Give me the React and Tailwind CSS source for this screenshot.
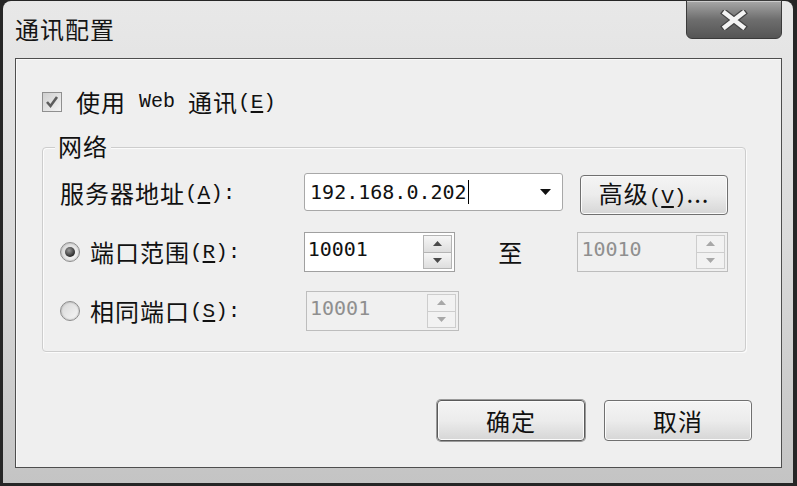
import React from 'react';

const cjk = "font-['Noto_Sans_CJK_SC','Noto_Sans',sans-serif]";
const mono = "font-['Liberation_Mono','DejaVu_Sans_Mono',monospace]";
const num = "font-['DejaVu_Sans_Mono','Liberation_Mono',monospace]";

// mnemonic like (A) with underlined letter
const Key = ({ k, colon }) => (
  <span className={`${mono} text-[21px] tracking-normal`}>
    (<span className="underline underline-offset-[3px]">{k}</span>){colon ? ':' : ''}
  </span>
);

const Tri = ({ up, disabled }) => (
  <svg width="9" height="5" viewBox="0 0 9 5">
    <path d={up ? 'M0 5 L4.5 0 L9 5 Z' : 'M0 0 L4.5 5 L9 0 Z'} fill={disabled ? '#a8a8a8' : '#4a4a4a'} />
  </svg>
);

function Spin({ value, disabled, width = 'w-[153px]' }) {
  return (
    <div className={`flex h-[40px] ${width} border ${disabled ? 'border-[#bdbdbd] bg-[#f0f0f0]' : 'border-[#a0a0a0] bg-white'}`}>
      <div className={`flex-1 pl-[3px] pt-[4px] ${num} text-[20px] leading-[24px] ${disabled ? 'text-[#8f8f8f]' : 'text-[#111]'}`}>
        {value}
      </div>
      <div className={`my-[2px] mr-[2px] flex w-[29px] flex-col border ${disabled ? 'border-[#cdcdcd]' : 'border-[#b4b4b4]'}`}>
        <div className={`flex flex-1 items-center justify-center border-b ${disabled ? 'border-[#cdcdcd] bg-[#f2f2f2]' : 'border-[#b4b4b4] bg-gradient-to-b from-[#f6f6f6] to-[#dedede]'}`}>
          <Tri up disabled={disabled} />
        </div>
        <div className={`flex flex-1 items-center justify-center ${disabled ? 'bg-[#f2f2f2]' : 'bg-gradient-to-b from-[#f6f6f6] to-[#dedede]'}`}>
          <Tri disabled={disabled} />
        </div>
      </div>
    </div>
  );
}

const Radio = ({ checked }) => (
  <div className="flex h-[20px] w-[20px] items-center justify-center rounded-full border border-[#8c8c8c] bg-gradient-to-br from-[#d6d6d6] to-[#f8f8f8] shadow-[inset_0_0_2px_rgba(0,0,0,0.3)]">
    {checked && (
      <div className="h-[10px] w-[10px] rounded-full bg-[radial-gradient(circle_at_40%_35%,#9a9a9a,#2c2c2c_70%)]" />
    )}
  </div>
);

const Button = ({ children, def, className = '' }) => (
  <div
    className={`flex items-center justify-center rounded-[4px] border bg-gradient-to-b from-[#f4f4f4] via-[#ececec] to-[#d6d6d6] shadow-[inset_0_0_0_1px_#fbfbfb] ${
      def ? 'border-[#5a5a5a] ring-1 ring-[#9a9a9a]' : 'border-[#707070]'
    } ${className}`}
  >
    {children}
  </div>
);

export default function App() {
  return (
    <div className={`h-[486px] w-[797px] bg-[#262626] pl-[3px] pr-[4px] pt-[1px] pb-[3px] ${cjk} text-[#111]`}>
      <div className="relative flex h-full w-full flex-col rounded-t-[8px] bg-gradient-to-b from-[#e8e8e8] via-[#dadada] to-[#c4c4c4] pb-[15px] pl-[12px] pr-[11px]">
        {/* title bar */}
        <div className="flex h-[57px] items-center pb-[2px]">
          <span className="text-[24px] leading-none tracking-[1px] text-[#151515]">通讯配置</span>
        </div>

        {/* close button */}
        <div className="absolute right-[11px] top-[-1px] flex h-[39px] w-[96px] items-center justify-center rounded-b-[6px] border border-[#3a3a3a] bg-gradient-to-b from-[#a8a8a8] via-[#6e6e6e] to-[#555555] shadow-[inset_0_1px_0_#cccccc]">
          <svg width="30" height="20" viewBox="0 0 30 20">
            <path d="M6 3 L24 17 M24 3 L6 17" stroke="#444444" strokeWidth="7" strokeLinecap="square" />
            <path d="M6 3 L24 17 M24 3 L6 17" stroke="#f4f4f4" strokeWidth="4.5" strokeLinecap="square" />
          </svg>
        </div>

        {/* client area */}
        <div className="flex flex-1 flex-col border border-[#4e4e4e] bg-[#efefef] shadow-[inset_1px_1px_0_#fafafa]">
          {/* checkbox row */}
          <div className="ml-[26px] mt-[33px] flex h-[20px] items-center">
            <div className="flex h-[20px] w-[20px] items-center justify-center border border-[#8f8f8f] bg-gradient-to-br from-[#cfcfcf] to-[#f4f4f4]">
              <svg width="14" height="14" viewBox="0 0 14 14">
                <path d="M2 7 L5.5 11 L12 2" stroke="#5c5c5c" strokeWidth="2.6" fill="none" />
              </svg>
            </div>
            <span className="ml-[14px] flex items-center text-[24px] leading-none tracking-[1px]">
              使用<span className={`${mono} mx-[13px] text-[20px] tracking-normal`}>Web</span>通讯
              <Key k="E" />
            </span>
          </div>

          {/* group box */}
          <div className="relative ml-[26px] mr-[35px] mt-[35px] flex flex-col gap-[19px] rounded-[4px] border border-[#cdcdcd] px-[17px] pb-[20px] pt-[25px] shadow-[inset_1px_1px_0_#fbfbfb,1px_1px_0_#fbfbfb]">
            <span className="absolute left-[12px] top-[-16px] bg-[#efefef] px-[3px] text-[24px] leading-[28px] tracking-[1px]">网络</span>

            {/* row 1 */}
            <div className="flex h-[40px] items-center">
              <div className="flex w-[246px] items-center text-[24px] leading-none tracking-[1px]">
                服务器地址<Key k="A" colon />
              </div>
              <div className="mb-[2px] flex h-[38px] w-[261px] items-center rounded-[3px] border border-[#a8a8a8] bg-white pl-[5px] pr-[11px]">
                <span className={`${num} text-[20px] leading-none`}>192.168.0.202</span>
                <span className="ml-[1px] h-[24px] w-[1px] bg-black" />
                <span className="flex-1" />
                <svg width="11" height="6" viewBox="0 0 11 6">
                  <path d="M0 0 L11 0 L5.5 6 Z" fill="#111" />
                </svg>
              </div>
              <Button className="ml-[17px] mt-[3px] h-[40px] w-[149px]">
                <span className="text-[24px] leading-none tracking-[1px]">
                  高级<Key k="V" />...
                </span>
              </Button>
            </div>

            {/* row 2 */}
            <div className="flex h-[40px] items-center">
              <div className="flex w-[246px] items-center">
                <Radio checked />
                <span className="ml-[10px] flex items-center text-[24px] leading-none tracking-[1px]">
                  端口范围<Key k="R" colon />
                </span>
              </div>
              <Spin value="10001" />
              <span className="ml-[43px] w-[80px] text-[24px] leading-none">至</span>
              <Spin value="10010" disabled width="w-[152px]" />
            </div>

            {/* row 3 */}
            <div className="flex h-[40px] items-center">
              <div className="flex w-[246px] items-center">
                <Radio />
                <span className="ml-[10px] flex items-center text-[24px] leading-none tracking-[1px]">
                  相同端口<Key k="S" colon />
                </span>
              </div>
              <Spin value="10001" disabled />
            </div>
          </div>

          {/* dialog buttons */}
          <div className="mr-[29px] mt-[48px] flex justify-end gap-[19px]">
            <Button def className="h-[41px] w-[148px]">
              <span className="text-[24px] leading-none tracking-[1px]">确定</span>
            </Button>
            <Button className="h-[41px] w-[148px]">
              <span className="text-[24px] leading-none tracking-[1px]">取消</span>
            </Button>
          </div>
        </div>
      </div>
    </div>
  );
}
